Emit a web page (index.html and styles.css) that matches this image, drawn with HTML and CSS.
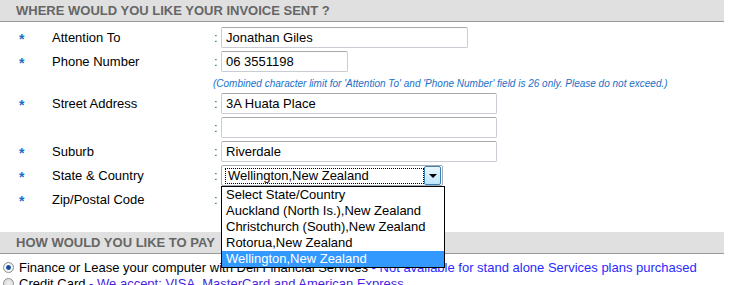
FILE: index.html
```html
<!DOCTYPE html>
<html lang="en">

<head>
  <meta charset="UTF-8">
  <title>Invoice details</title>
  <link rel="stylesheet" href="styles.css">
</head>

<body>
  <div class="page">
    <h2 class="section-head">Where would you like your invoice sent ?</h2>

    <div class="form">
      <div class="row">
        <span class="req">*</span>
        <span class="label">Attention To</span>
        <span class="colon">:</span>
        <div class="field w-long">Jonathan Giles</div>
      </div>

      <div class="row">
        <span class="req">*</span>
        <span class="label">Phone Number</span>
        <span class="colon">:</span>
        <div class="field w-short">06 3551198</div>
      </div>

      <div class="note">(Combined character limit for 'Attention To' and 'Phone Number' field is 26 only. Please do not exceed.)</div>

      <div class="row">
        <span class="req">*</span>
        <span class="label">Street Address</span>
        <span class="colon">:</span>
        <div class="field w-wide">3A Huata Place</div>
      </div>

      <div class="row">
        <span class="req"></span>
        <span class="label"></span>
        <span class="colon">:</span>
        <div class="field w-wide"></div>
      </div>

      <div class="row">
        <span class="req">*</span>
        <span class="label">Suburb</span>
        <span class="colon">:</span>
        <div class="field w-wide">Riverdale</div>
      </div>

      <div class="row">
        <span class="req">*</span>
        <span class="label">State &amp; Country</span>
        <span class="colon">:</span>
        <div class="select">
          <div class="select-box">
            <span class="select-value">Wellington,New Zealand</span>
            <span class="select-btn"><i class="arrow"></i></span>
          </div>
          <!-- lista aberta do select -->
          <ul class="select-list">
            <li>Select State/Country</li>
            <li>Auckland (North Is.),New Zealand</li>
            <li>Christchurch (South),New Zealand</li>
            <li>Rotorua,New Zealand</li>
            <li class="active">Wellington,New Zealand</li>
          </ul>
        </div>
      </div>

      <div class="row">
        <span class="req">*</span>
        <span class="label">Zip/Postal Code</span>
        <span class="colon">:</span>
      </div>
    </div>

    <h2 class="section-head pay-head">How would you like to pay</h2>

    <div class="pay-options">
      <div class="pay-row"><span class="radio checked"></span>Finance or Lease your computer with Dell Financial Services <span class="pay-link">- Not available for stand alone Services plans purchased</span></div>
      <div class="pay-row"><span class="radio"></span>Credit Card <span class="pay-link visited">- We accept: VISA, MasterCard and American Express</span></div>
    </div>
  </div>
</body>

</html>
```

FILE: styles.css
```css
* {
  margin: 0;
  padding: 0;
  box-sizing: border-box;
}

body {
  font-family: 'Liberation Sans', Arial, sans-serif;
  font-size: 13px;
  color: #000;
  background: #fff;
  overflow: hidden;
}

.page {
  width: 724px;
}

.section-head {
  height: 22px;
  line-height: 21px;
  padding-left: 16px;
  font-size: 13px;
  font-weight: bold;
  text-transform: uppercase;
  color: #666;
  background: #e0e0e0;
  border-bottom: 1px solid #999;
}

.form {
  padding-top: 5px;
}

.row {
  display: flex;
  align-items: center;
  height: 21px;
  margin-bottom: 3px;
}

.req {
  width: 52px;
  padding-left: 19px;
  color: #1a6fc8;
  font-weight: bold;
  font-size: 14px;
  line-height: 21px;
  position: relative;
  top: 2px;
}

.label {
  width: 162px;
}

.colon {
  width: 7px;
  color: #555;
}

.field {
  height: 21px;
  line-height: 19px;
  padding-left: 4px;
  border: 1px solid #c8cdd3;
  border-top-color: #a9a9a9;
  border-radius: 2px;
  background: #fff;
}

.w-long {
  width: 247px;
}

.w-short {
  width: 127px;
}

.w-wide {
  width: 276px;
}

.note {
  height: 18px;
  line-height: 18px;
  margin-left: 213px;
  font-size: 10px;
  font-style: italic;
  color: #1a6fc8;
}

/* select aberto */
.select {
  position: relative;
  width: 222px;
  height: 21px;
}

.select-box {
  display: flex;
  height: 21px;
  padding: 2px 1px 1px 3px;
  border: 1px solid #a5acb5;
  border-radius: 2px;
  background: #fff;
}

.select-value {
  flex: 1;
  line-height: 14px;
  padding-left: 2px;
  border: 1px dotted #000;
}

.select-btn {
  width: 17px;
  margin-top: -2px;
  margin-bottom: -1px;
  border: 1px solid #3c7fb1;
  border-radius: 2px;
  background: linear-gradient(#eaf6fd, #bee6fd);
  display: flex;
  align-items: center;
  justify-content: center;
}

.arrow {
  width: 0;
  height: 0;
  border-left: 4px solid transparent;
  border-right: 4px solid transparent;
  border-top: 4px solid #000;
}

.select-list {
  position: absolute;
  top: 21px;
  left: 0;
  width: 224px;
  list-style: none;
  background: #fff;
  border: 1px solid #000;
  z-index: 2;
}

.select-list li {
  height: 16px;
  line-height: 16px;
  padding-left: 4px;
  white-space: nowrap;
}

.select-list li.active {
  background: #3399ff;
  color: #fff;
}

.pay-head {
  margin-top: 22px;
}

.pay-options {
  padding-top: 6px;
}

.pay-row {
  height: 16px;
  line-height: 16px;
  white-space: nowrap;
}

.pay-row .radio {
  display: inline-block;
  vertical-align: -1px;
  width: 11px;
  height: 11px;
  margin: 0 5px 0 3px;
  border-radius: 50%;
  border: 1px solid #8e8f8f;
  background: radial-gradient(circle, #f0f0f0 0%, #d6d6d6 100%);
}

.pay-row .radio.checked {
  background: radial-gradient(circle, #0d3f7a 0, #1e5fa8 2px, #ffffff 3px, #e2e2e2 5px);
}

.pay-link {
  color: #2a2aff;
}

.pay-link.visited {
  color: #4a1fe0;
}
```
